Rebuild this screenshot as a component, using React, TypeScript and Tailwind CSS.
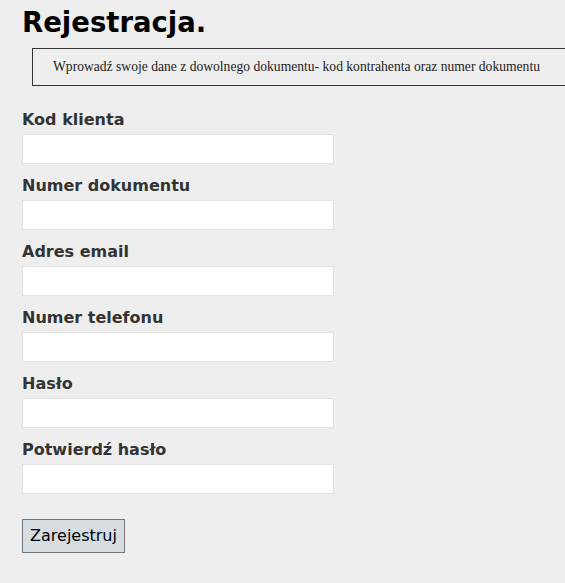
import React from "react";

const fields = [
  "Kod klienta",
  "Numer dokumentu",
  "Adres email",
  "Numer telefonu",
  "Hasło",
  "Potwierdź hasło",
];

export default function App() {
  return (
    <div className="w-full min-h-[583px] overflow-hidden bg-[#eeeeee] pl-[22px] pt-[5px] font-['DejaVu_Sans',Verdana,sans-serif]">
      <h1 className="text-[27.5px] leading-[34px] font-bold text-black">Rejestracja.</h1>
      <div className="mt-[9px] ml-[10px] w-[560px] border-[1.5px] border-[#333333] pl-[20px] py-[10px] font-['Liberation_Serif',serif] text-[13.6px] leading-[16px] text-[#222222]">
        Wprowadź swoje dane z dowolnego dokumentu- kod kontrahenta oraz numer dokumentu
      </div>
      <form className="mt-[25px] flex flex-col" onSubmit={(e) => e.preventDefault()}>
        {fields.map((f, i) => (
          <div key={f} className={i === 0 ? "flex flex-col" : "mt-[13px] flex flex-col"}>
            <label className="text-[16px] leading-[18px] font-bold text-[#333333]">{f}</label>
            <input
              type={f.startsWith("Has") || f.startsWith("Potw") ? "password" : "text"}
              className="mt-[5px] h-[30px] w-[312px] border border-[#e2e2e2] bg-white outline-none"
            />
          </div>
        ))}
        <div className="mt-[25px]">
          <button
            type="submit"
            className="h-[34px] w-[103px] border border-[#777777] bg-[#d5dde3] text-[16px] text-black"
          >
            Zarejestruj
          </button>
        </div>
      </form>
    </div>
  );
}
